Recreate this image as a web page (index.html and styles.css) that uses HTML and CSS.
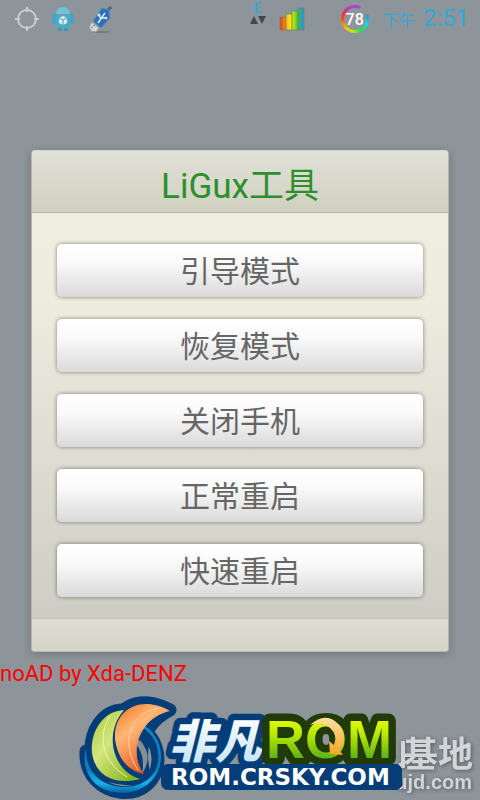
FILE: index.html
```html
<!DOCTYPE html>
<html lang="zh-CN">
<head>
<meta charset="utf-8">
<meta name="viewport" content="width=device-width, initial-scale=1">
<title>LiGux工具</title>
<link rel="stylesheet" href="styles.css">
</head>
<body>
<header class="status">
  <svg class="icon-target" width="26" height="26" viewBox="0 0 26 26" fill="none" stroke="#cbcdcd" aria-hidden="true">
    <circle cx="13" cy="13" r="9" stroke-width="2"/>
    <path d="M13 1v5M13 20v5M1 13h5M20 13h5" stroke-width="2"/>
  </svg>
  <svg class="icon-robot" width="26" height="28" viewBox="0 0 26 28" aria-hidden="true">
    <path d="M8 22h4v4H8zM14 22h4v4h-4z" fill="#4396b0"/>
    <rect x="2" y="8" width="4" height="11" rx="1" fill="#4aa3c2"/>
    <rect x="20" y="8" width="4" height="11" rx="1" fill="#4aa3c2"/>
    <path d="M6 9a7 7 0 0 1 14 0z" fill="#6fc4d9"/>
    <path d="M6 10h14v11q0 2-2 2H8q-2 0-2-2z" fill="#4eabc8"/>
    <path d="M9 13l4-2 4 2v5l-4 2-4-2z" fill="#dceef2"/>
    <path d="M9 13l4 2 4-2M13 15v5" fill="none" stroke="#4b9bb2"/>
  </svg>
  <svg class="icon-usb" width="28" height="28" viewBox="0 0 28 28" aria-hidden="true">
    <ellipse cx="14" cy="27" rx="9" ry="1" fill="#747b80"/>
    <path d="M19 7l5-5" stroke="#5b6267" stroke-width="3"/>
    <path d="M15 3l7 2 1 8-9 10-8-7z" fill="#2e70b3" stroke="#5291c9" stroke-linejoin="round"/>
    <path d="M5 17l7 6-3 4-5-1-2-4z" fill="#d6d8d7" stroke="#969b9d"/>
    <path d="M4 22l2 1M6 20l2 1" stroke="#777"/>
    <path d="M11 18l7-10M14 14l-2-4M15 13h4" stroke="#dcebf5" stroke-width="1.5" fill="none"/>
    <circle cx="12" cy="10" r="1.5" fill="#dcebf5"/><circle cx="19" cy="13" r="1.3" fill="#dcebf5"/>
  </svg>
  <div class="network">
    <span>E</span>
    <svg width="18" height="9" viewBox="0 0 18 9" fill="#444749" aria-hidden="true"><path d="M1 8l4-8 4 8zM9 0h8l-4 8z"/></svg>
  </div>
  <svg class="signal" width="26" height="24" viewBox="0 0 26 24" stroke="#777d77" stroke-width=".7" aria-hidden="true">
    <defs>
      <linearGradient id="s1"><stop stop-color="#e33a19"/><stop offset="1" stop-color="#ff9609"/></linearGradient>
      <linearGradient id="s2"><stop stop-color="#f6ba0c"/><stop offset="1" stop-color="#fff616"/></linearGradient>
      <linearGradient id="s3"><stop stop-color="#c8f50b"/><stop offset="1" stop-color="#48c71b"/></linearGradient>
      <linearGradient id="s4"><stop stop-color="#37b773"/><stop offset="1" stop-color="#2796cc"/></linearGradient>
    </defs>
    <path d="M1 10h6v13H1z" fill="url(#s1)"/><path d="M7 7h6v16H7z" fill="url(#s2)"/>
    <path d="M13 4h6v19h-6z" fill="url(#s3)"/><path d="M19 1h6v22h-6z" fill="url(#s4)"/>
  </svg>
  <div class="battery"><span>78</span></div>
  <div class="clock"><span class="half">下午</span><span>2:51</span></div>
</header>

<main class="panel">
  <h1 class="title">LiGux工具</h1>
  <div class="actions">
    <button type="button">引导模式</button>
    <button type="button">恢复模式</button>
    <button type="button">关闭手机</button>
    <button type="button">正常重启</button>
    <button type="button">快速重启</button>
  </div>
  <div class="panel-foot"></div>
</main>
<p class="credit">noAD by Xda-DENZ</p>

<footer class="brand">
  <svg viewBox="0 0 480 115">
    <defs>
      <linearGradient id="ring" x2="0" y2="1"><stop stop-color="#0a8dcc"/><stop offset=".65" stop-color="#087fc0"/><stop offset=".85" stop-color="#18b4e4"/><stop offset="1" stop-color="#075fa8"/></linearGradient>
      <linearGradient id="leaf" x2=".8" y2="1"><stop stop-color="#a8c832"/><stop offset=".45" stop-color="#d5e680"/><stop offset="1" stop-color="#86b61d"/></linearGradient>
      <linearGradient id="flame" x2=".6" y2="1"><stop stop-color="#ed7020"/><stop offset=".4" stop-color="#ffb875"/><stop offset="1" stop-color="#e34c13"/></linearGradient>
      <linearGradient id="lime" gradientUnits="userSpaceOnUse" x1="0" y1="29" x2="0" y2="72"><stop stop-color="#eaff00"/><stop offset=".4" stop-color="#b9e900"/><stop offset="1" stop-color="#59ad19"/></linearGradient>
      <linearGradient id="ice" gradientUnits="userSpaceOnUse" x1="0" y1="28" x2="0" y2="74"><stop stop-color="#fff"/><stop offset="1" stop-color="#c7e6fb"/></linearGradient>
      <linearGradient id="gold" x2="0" y2="1"><stop stop-color="#ffe0a0"/><stop offset="1" stop-color="#f5a51f"/></linearGradient>
    </defs>
    <g class="watermark" text-anchor="end">
      <path d="M401 53h4v27h-6v-5h2z"/>
      <text class="wm-name" x="473" y="79">基地</text>
      <text class="wm-url" x="472" y="101">ujd.com</text>
    </g>
    <g stroke="#053d78" stroke-width="13" stroke-linejoin="round" stroke-linecap="round" fill="#053d78">
      <path d="M122 22C103 23 89 42 91 68q2 24 49 23L122 60z"/>
      <path d="M170 22C139 5 112 20 115 48q5 31 29 38-11-45 26-64z"/>
      <path d="M86 63C83 113 158 121 158 70q-1-18-15-29" fill="none"/>
    </g>
    <path d="M134 54q12 12 8 32 10-15 2-28-5-10-10-4z" fill="#858f96"/>
    <path d="M86 60C85 84 102 99 124 99c24 0 37-17 34-35-1-11-7-19-16-25l3-1c15 10 18 28 15 39-4 17-20 28-37 28-29 0-43-22-37-45z" fill="url(#ring)"/>
    <path d="M124 22c-22 1-34 23-32 43 3 21 20 33 48 26-27-8-37-45-16-69z" fill="url(#leaf)"/>
    <path d="M110 28c-13 20-8 46 17 61" fill="none" stroke="#eef6b2" stroke-width="1"/>
    <path d="M170 23c-29-17-57-1-55 28 3 21 14 32 29 35-16-21-5-56 26-63z" fill="url(#flame)"/>
    <path d="M158 20c-31 7-37 36-20 62" fill="none" stroke="#ffd2a0" stroke-width="1"/>

    <text class="mark-cn" x="169" y="70">非凡</text>
    <rect x="161" y="76" width="241" height="26" rx="7" fill="#053d78"/>
    <text class="mark-rom" x="266" y="70">ROM</text>
    <path d="M310 37q17-15 30 1c6 10 5 18 0 25l3 4-13-1-1-13 5 4q4-10-4-17-8-7-20-3z" fill="url(#gold)"/>
    <rect x="254" y="76" width="148" height="26" rx="7" fill="#053d78"/>
    <text class="mark-url" x="171" y="97">ROM.CRSKY.COM</text>
  </svg>
</footer>
</body>
</html>
```
FILE: styles.css
```css
* { box-sizing: border-box; }

body {
  margin: 0;
  min-height: 100vh;
  display: flex;
  flex-direction: column;
  background: #8d949a;
  font-family: Roboto, "Noto Sans CJK SC", sans-serif;
}

.status {
  display: flex;
  align-items: center;
  height: 38px;
  padding: 0 11px 0 14px;
  color: #32a9d6;
}
.status svg { flex: none; }
.icon-robot { margin-left: 10px; }
.icon-usb { margin-left: 11px; }
.network {
  display: flex;
  flex-direction: column;
  align-items: center;
  margin-left: auto;
  padding-bottom: 12px;
  font-size: 14px;
  line-height: 15px;
  font-weight: 500;
}
.signal { margin-left: 12px; }
.battery {
  width: 28px;
  height: 28px;
  margin-left: 36px;
  padding: 3px;
  border-radius: 50%;
  background: conic-gradient(#a648d4 0 20deg, #8d949a 30deg 65deg, #298fe0 75deg, #0ddde8 110deg, #12e45c 150deg, #b4ed00 190deg, #ffc400 225deg, #ff4020 275deg, #e52c62 310deg, #a648d4 340deg);
}
.battery span {
  display: block;
  height: 22px;
  border-radius: 50%;
  background: #8d949a;
  color: #fff;
  font-size: 16px;
  font-weight: 500;
  line-height: 23px;
  text-align: center;
}
.clock {
  display: flex;
  align-items: baseline;
  gap: 8px;
  margin-left: 14px;
  font-size: 24px;
  line-height: 40px;
  font-weight: 400;
  white-space: nowrap;
}
.half {
  font-size: 16px;
  font-weight: 400;
}

.panel {
  margin: 112px 31px 0;
  border-radius: 4px;
  overflow: hidden;
  border: 1px solid #b9b9ae;
  border-top-color: #d5d5cc;
  background: linear-gradient(#f2f0e4, #eeecdf 30%, #cbcac1);
  box-shadow: 0 2px 8px #0003;
}
.title {
  margin: 0;
  height: 62px;
  border-bottom: 1px solid #b4b5a8;
  background: linear-gradient(#e1e0d9, #d0d1c0);
  color: #2c8f2c;
  font-size: 35px;
  line-height: 72px;
  font-weight: 400;
  text-align: center;
}
.actions {
  display: flex;
  flex-direction: column;
  gap: 22px;
  padding: 31px 25px 21px;
}
.actions button {
  height: 53px;
  padding: 2px 0 0;
  border: 0;
  border-radius: 5px;
  background: linear-gradient(#fff, #fafafa 35%, #dadada);
  box-shadow: 0 0 4px #0007;
  color: #666;
  font: 400 30px/51px Roboto, "Noto Sans CJK SC", sans-serif;
}
.panel-foot {
  height: 33px;
  border-top: 1px solid #c2c1b4;
  background: linear-gradient(#dddcd2, #d5d5c7);
}

.credit {
  margin: 8px 0 0;
  color: #f00;
  font-size: 22px;
  line-height: 28px;
}

.brand { margin-top: auto; }
.brand svg {
  display: block;
  width: 100%;
}
.watermark {
  fill: #d2d5d7;
  font-family: "Liberation Sans", "Noto Sans CJK SC", sans-serif;
  font-weight: 700;
  filter: drop-shadow(1px 1px 2px #0006);
}
.wm-name { font-size: 35px; }
.wm-url { font-size: 20px; }
.mark-cn {
  fill: url(#ice);
  stroke: #053d78;
  stroke-width: 13px;
  stroke-linejoin: round;
  paint-order: stroke;
  font: italic 900 46px "Noto Sans CJK SC", sans-serif;
}
.mark-rom {
  fill: url(#lime);
  stroke: #203b08;
  stroke-width: 15px;
  stroke-linejoin: round;
  paint-order: stroke;
  font: 700 54px "Liberation Sans", sans-serif;
}
.mark-url {
  fill: #fff;
  font: 700 23px "DejaVu Sans", sans-serif;
}
```
